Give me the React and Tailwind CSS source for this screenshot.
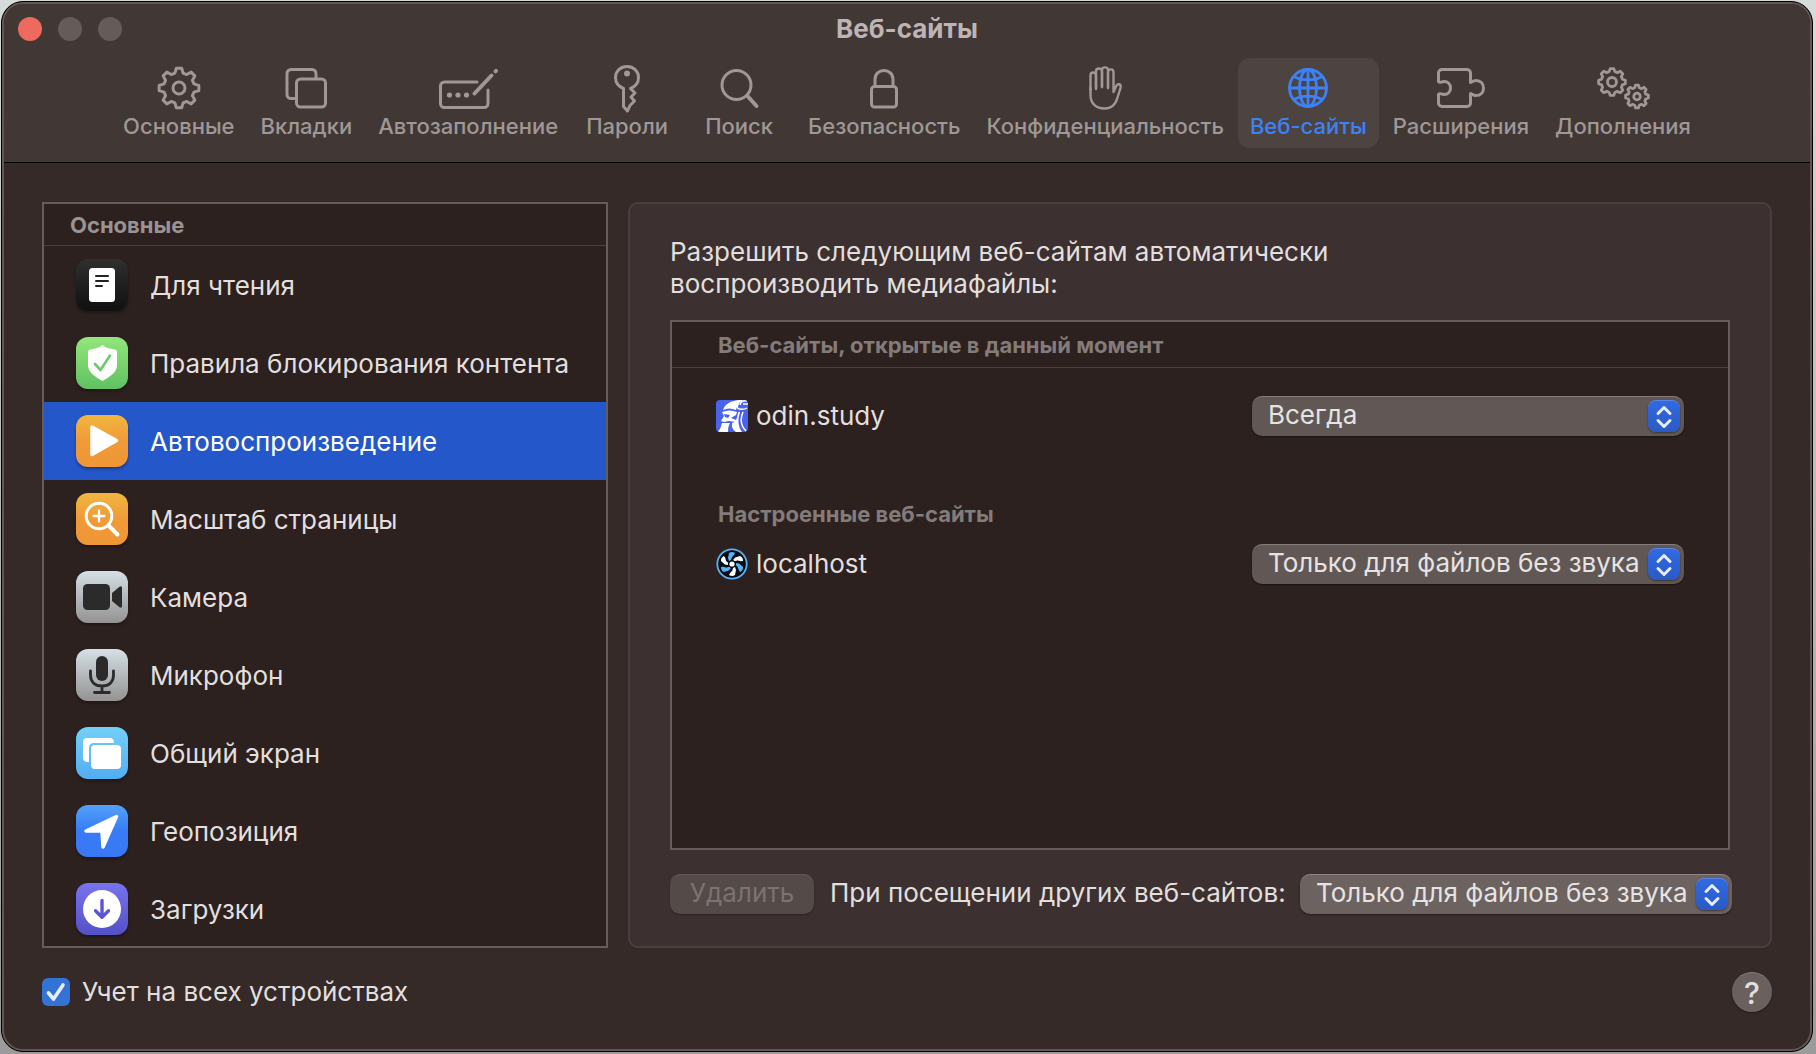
import React, { useState } from "react";

function gearPath(cx, cy, outer, inner, teeth) {
  const pts = [];
  const step = (Math.PI * 2) / teeth;
  for (let i = 0; i < teeth; i++) {
    const a = i * step - Math.PI / 2;
    [
      [inner, -0.34],
      [outer, -0.17],
      [outer, 0.17],
      [inner, 0.34],
    ].forEach(([r, t]) => {
      pts.push(`${(cx + r * Math.cos(a + t * step)).toFixed(2)} ${(cy + r * Math.sin(a + t * step)).toFixed(2)}`);
    });
  }
  return `M${pts.join("L")}Z`;
}

function ToolIcon({ w, children }) {
  return (
    <svg width={w} height="52" viewBox={`0 0 ${w} 52`} fill="none" stroke="currentColor" strokeWidth="3" strokeLinecap="round" strokeLinejoin="round" aria-hidden="true">
      {children}
    </svg>
  );
}

const toolIcons = {
  general: (
    <ToolIcon w={48}>
      <path d={gearPath(24, 26, 20, 15.5, 8)} />
      <circle cx="24" cy="26" r="6" />
    </ToolIcon>
  ),
  tabs: (
    <ToolIcon w={48}>
      <path d="M13.5 36.5H9A4 4 0 0 1 5 32.5V11.5A4 4 0 0 1 9 7.5H30A4 4 0 0 1 34 11.5V16" />
      <rect x="14.5" y="17" width="29" height="28" rx="4" />
    </ToolIcon>
  ),
  autofill: (
    <ToolIcon w={62}>
      <path d="M40 20H7.5A4 4 0 0 0 3.5 24V41.5A4 4 0 0 0 7.5 45.5H47A4 4 0 0 0 51 41.5V28" />
      <path d="M37.5 31.5L54.5 13.5" strokeWidth="4" />
      <path d="M58.5 9.3L59 8.8" strokeWidth="4" />
      <g fill="currentColor" stroke="none">
        <circle cx="12.5" cy="33" r="2.6" />
        <circle cx="21" cy="33" r="2.6" />
        <circle cx="29.5" cy="33" r="2.6" />
      </g>
    </ToolIcon>
  ),
  passwords: (
    <ToolIcon w={48}>
      <path d="M20.5 26.5C15.5 24.5 12.5 20.5 12.5 15.5C12.5 9 17.5 4.5 24 4.5S35.5 9 35.5 15.5C35.5 20.5 32.5 24.5 27.5 26.5L32 31L28 35L31.5 39L27 43.5L24.5 49L20.5 44.5Z" />
      <circle cx="24" cy="11.5" r="3" fill="currentColor" stroke="none" />
    </ToolIcon>
  ),
  search: (
    <ToolIcon w={48}>
      <circle cx="21.5" cy="23" r="14.5" />
      <path d="M32.5 34L41.5 44" strokeWidth="4" />
    </ToolIcon>
  ),
  security: (
    <ToolIcon w={48}>
      <rect x="11.5" y="24.5" width="25" height="20.5" rx="3" />
      <path d="M15 24V17.5C15 12 19 8.5 24 8.5S33 12 33 17.5V24" />
    </ToolIcon>
  ),
  privacy: (
    <ToolIcon w={48}>
      <g strokeWidth="2.4">
        <path d="M9.5 28V13.5C9.5 9.5 15 9.5 15 13.5V27" />
        <path d="M15 26V9.5C15 5.5 21 5.5 21 9.5V25" />
        <path d="M21 25V8C21 4.5 27 4.5 27 8V26" />
        <path d="M27 26V10C27 6.5 32.5 6.5 32.5 10V30L35 24.5C36.5 20.5 40.5 22 39.5 26L36.5 35.5C34.5 43 30 46.5 23.5 46.5C15 46.5 9.5 41.5 9.5 33V26" />
      </g>
    </ToolIcon>
  ),
  websites: (
    <ToolIcon w={48}>
      <g strokeWidth="2.8">
        <circle cx="24" cy="26" r="18.5" />
        <ellipse cx="24" cy="26" rx="8.5" ry="18.5" />
        <path d="M24 7.5V44.5M5.5 26H42.5M10 14.5C18 19 30 19 38 14.5M10 37.5C18 33 30 33 38 37.5" />
      </g>
    </ToolIcon>
  ),
  extensions: (
    <ToolIcon w={52}>
      <path d="M3.5 19.5V11A3.5 3.5 0 0 1 7 7.5H32A3.5 3.5 0 0 1 35.5 11V20.5C37 20.5 37.5 18.5 41 18.5C45.5 18.5 48.5 21.5 48.5 26S45.5 33.5 41 33.5C37.5 33.5 37 31.5 35.5 31.5V41A3.5 3.5 0 0 1 32 44.5H7A3.5 3.5 0 0 1 3.5 41V32.5C5 30.5 6 32.5 9 32.5C13 32.5 15.5 30 15.5 26S13 19.5 9 19.5C6 19.5 5 21.5 3.5 19.5Z" />
    </ToolIcon>
  ),
  advanced: (
    <ToolIcon w={56}>
      <g strokeWidth="2.8">
        <path d={gearPath(17, 20, 13.5, 10.8, 8)} />
        <circle cx="17" cy="20" r="4.5" />
        <path d={gearPath(42, 34.5, 11.5, 9, 8)} />
        <circle cx="42" cy="34.5" r="3.3" />
      </g>
    </ToolIcon>
  ),
};

const tools = [
  ["general", "Основные"],
  ["tabs", "Вкладки"],
  ["autofill", "Автозаполнение"],
  ["passwords", "Пароли"],
  ["search", "Поиск"],
  ["security", "Безопасность"],
  ["privacy", "Конфиденциальность"],
  ["websites", "Веб-сайты"],
  ["extensions", "Расширения"],
  ["advanced", "Дополнения"],
];

function Glyph({ children }) {
  return (
    <svg viewBox="0 0 52 52" className="size-full" fill="none" strokeLinecap="round" strokeLinejoin="round" aria-hidden="true">
      {children}
    </svg>
  );
}

const categories = [
  {
    name: "Для чтения",
    tile: "from-[#303030] to-[#101010]",
    glyph: (
      <Glyph>
        <rect x="13" y="9" width="26" height="34" rx="3.5" fill="#fff" />
        <path d="M20 17H32M20 22H32M20 27H26" stroke="#222" strokeWidth="2" />
      </Glyph>
    ),
  },
  {
    name: "Правила блокирования контента",
    tile: "from-[#92e67b] to-[#60c162]",
    glyph: (
      <Glyph>
        <path d="M26.5 8C30 11 35 12 39 12.5Q41 13 41 15V28C41 36 33 40 26.5 44C20 40 12 36 12 28V15Q12 13 14 12.5C18 12 23 11 26.5 8Z" fill="#fff" />
        <path d="M19 27L24.5 33L34 18.5" stroke="#6bcb68" strokeWidth="2.6" />
      </Glyph>
    ),
  },
  {
    name: "Автовоспроизведение",
    tile: "from-[#f0b640] via-[#f09a38] to-[#ef9635]",
    glyph: (
      <Glyph>
        <path d="M16 12L40.5 25.5L16 39.5Z" fill="#fff" stroke="#fff" strokeWidth="3.5" />
      </Glyph>
    ),
  },
  {
    name: "Масштаб страницы",
    tile: "from-[#f0b640] via-[#f09a38] to-[#ef9635]",
    glyph: (
      <Glyph>
        <g stroke="#fff">
          <circle cx="23" cy="23" r="12.8" strokeWidth="3" />
          <path d="M32.5 32.5L41.5 41.5" strokeWidth="4" />
          <path d="M23 17.5V28.5M17.5 23H28.5" strokeWidth="2.3" />
        </g>
      </Glyph>
    ),
  },
  {
    name: "Камера",
    tile: "from-[#d5e0e6] to-[#949392]",
    glyph: (
      <Glyph>
        <rect x="7" y="13" width="27" height="26" rx="4.5" fill="#2b2b2b" />
        <path d="M36 22L43.5 15.8Q46 14.5 46 17V35Q46 37.5 43.5 36.2L36 30Z" fill="#2b2b2b" />
      </Glyph>
    ),
  },
  {
    name: "Микрофон",
    tile: "from-[#d5e0e6] to-[#949392]",
    glyph: (
      <Glyph>
        <rect x="20" y="7" width="12" height="25" rx="6" fill="#2b2b2b" />
        <path d="M14.5 22V26C14.5 33 19 37 26 37S37.5 33 37.5 26V22M26 37V43.5M18.5 43.5H33.5" stroke="#2b2b2b" strokeWidth="2.8" />
      </Glyph>
    ),
  },
  {
    name: "Общий экран",
    tile: "from-[#72cff8] to-[#53adf2]",
    glyph: (
      <Glyph>
        <path d="M12 35Q7 35 7 31V15Q7 11 11 11H34Q38 11 38 16H18Q13 16 13 21V35Z" fill="#fff" />
        <rect x="15" y="18" width="30" height="24" rx="4" fill="#fff" />
      </Glyph>
    ),
  },
  {
    name: "Геопозиция",
    tile: "from-[#53a1f8] via-[#387bf7] to-[#3878f6]",
    glyph: (
      <Glyph>
        <path d="M40.5 11.5L27 42L26 26H10Z" fill="#fff" stroke="#fff" strokeWidth="3.5" />
      </Glyph>
    ),
  },
  {
    name: "Загрузки",
    tile: "from-[#7873ee] to-[#5450c6]",
    glyph: (
      <Glyph>
        <circle cx="26" cy="26" r="19" fill="#fff" />
        <path d="M26 17.5V34M19.5 27.8L26 34.2L32.5 27.8" stroke="#5b55d6" strokeWidth="3.4" />
      </Glyph>
    ),
  },
];

function OdinIcon() {
  return (
    <svg viewBox="0 0 32 32" className="size-8 shrink-0 rounded-sm" aria-hidden="true">
      <rect width="32" height="32" fill="#4a63ee" />
      <path d="M7 10C9 4 14 1 23 0H27C24 2 21 5 20 10Q13 7 7 10Z" fill="#fff" />
      <path d="M6 12Q13 9 21 12L20 15L15 18L20 20V22L13 21L8 22L5 21L8 16Z" fill="#fff" />
      <path d="M8 14L14 15L12 18L9 17Z" fill="#4a63ee" />
      <path d="M6 23L14 23Q12 26 12 32H2Q5 28 6 23Z" fill="#fff" />
      <path d="M16 23Q21 22 22 13Q23 11 24 12Q20 24 26 32H20Q15 29 16 23Z" fill="#fff" />
      <path d="M27 12C24 19 25 26 30 31M22 4Q20 9 24 9Q28 10 31 8M31 1Q25 0 24 5M32 4H27" fill="none" stroke="#fff" strokeWidth="1.5" />
    </svg>
  );
}

function LocalhostIcon() {
  return (
    <svg viewBox="0 0 32 32" className="size-8 shrink-0" aria-hidden="true">
      <circle cx="16" cy="16" r="14.7" fill="#060b14" stroke="#54b4f4" strokeWidth="1.8" />
      {[0, 60, 120, 180, 240, 300].map((a, i) => (
        <path key={a} d="M12 10L13 5Q16 3 19 5L18 7Q15 9 15 12L13 13Z" fill={i % 2 ? "#fff" : "#54b4f4"} transform={`rotate(${a} 16 16)`} />
      ))}
      <circle cx="16" cy="16" r="2.6" fill="#fff" />
    </svg>
  );
}

const policies = ["Всегда", "Только для файлов без звука", "Никогда"];

function PopUp({ id, label, initial, tone }) {
  return (
    <div className="relative w-[432px] shrink-0">
      <select
        id={id}
        aria-label={label}
        defaultValue={initial}
        className={`block h-10 w-full appearance-none rounded-[10px] border-t pr-10 pb-1 pl-4 text-[26px] leading-8 text-[#e6e3e3] shadow-[0_1px_2px_rgba(0,0,0,0.45)] outline-none ${tone}`}
      >
        {policies.map((p) => (
          <option key={p}>{p}</option>
        ))}
      </select>
      <span className="pointer-events-none absolute top-1 right-1 flex h-8 w-8 items-center justify-center rounded-lg border-t border-[#5a85e6] bg-linear-to-b from-[#3169e2] to-[#2a5ac4] shadow-[0_1px_2px_rgba(0,0,0,0.4)]">
        <svg width="18" height="24" viewBox="0 0 18 24" fill="none" stroke="#e6ecfa" strokeWidth="3" strokeLinecap="round" strokeLinejoin="round" aria-hidden="true">
          <path d="M3 8.5L9 2.5L15 8.5M3 15.5L9 21.5L15 15.5" />
        </svg>
      </span>
    </div>
  );
}

export default function App() {
  const [activeTool, setActiveTool] = useState("websites");
  const [activeCategory, setActiveCategory] = useState("Автовоспроизведение");

  return (
    <div className="flex min-h-screen flex-col bg-linear-to-b from-[#d5dcd9] to-[#9b9b9b] pt-px pr-[3px] pb-0.5 pl-px font-['Inter',sans-serif] text-[#e2dfdf]">
      <div className="flex grow flex-col overflow-hidden rounded-[22px] border border-black bg-[#352a28]">
        <div className="flex grow flex-col rounded-[21px] border-2 border-[#625755]">
          <header className="flex flex-col rounded-t-[19px] border-b border-black bg-[#413735] pb-[14px]">
            <div className="grid h-[54px] grid-cols-[1fr_auto_1fr] items-center px-3.5 pb-1">
              <div className="flex gap-4">
                <button aria-label="Закрыть" className="size-6 rounded-full bg-[#ec6a5e]" />
                <button aria-label="Свернуть" className="size-6 rounded-full bg-[#655b59]" />
                <button aria-label="Развернуть" className="size-6 rounded-full bg-[#655b59]" />
              </div>
              <h1 className="text-[26px] leading-8 font-bold text-[#beb4b3]">Веб-сайты</h1>
            </div>
            <nav className="flex justify-center gap-0.5">
              {tools.map(([id, name]) => (
                <button
                  key={id}
                  onClick={() => setActiveTool(id)}
                  className={`flex h-[90px] min-w-[110px] flex-col items-center rounded-xl px-3 pt-1 text-[22px] leading-6 font-medium ${activeTool === id ? "bg-[#4d4442] text-[#3c82f6]" : "text-[#9f9896]"}`}
                >
                  {toolIcons[id]}
                  <span>{name}</span>
                </button>
              ))}
            </nav>
          </header>

          <main className="flex grow flex-col px-[38px] pt-[39px]">
            <div className="flex gap-5">
              <section className="w-[566px] shrink-0 border-2 border-[#665c5a] bg-[#2c211f]">
                <h2 className="h-[42px] border-b border-[#4b403e] pl-[26px] text-[22px] leading-[42px] font-bold text-[#9b9391]">Основные</h2>
                <ul className="h-[700px] overflow-hidden">
                  {categories.map((c) => (
                    <li key={c.name}>
                      <button
                        onClick={() => setActiveCategory(c.name)}
                        className={`flex h-[78px] w-full items-center gap-[22px] px-8 text-left text-[26px] ${activeCategory === c.name ? "bg-[#2457c9] text-white" : ""}`}
                      >
                        <span className={`size-[52px] shrink-0 rounded-xl bg-linear-to-b shadow-[0_2px_3px_rgba(0,0,0,0.35)] ${c.tile}`}>{c.glyph}</span>
                        <span className="whitespace-nowrap">{c.name}</span>
                      </button>
                    </li>
                  ))}
                </ul>
              </section>

              <section className="flex grow flex-col rounded-[10px] border-2 border-[#4a3f3d] bg-[#3c3130] pt-8 pr-[38px] pb-8 pl-10">
                <p className="max-w-[700px] text-[26px] leading-8">Разрешить следующим веб-сайтам автоматически воспроизводить медиафайлы:</p>
                <div className="mt-5 mr-0.5 grow border-2 border-[#665c5a] bg-[#2c211f]">
                  <h3 className="h-[46px] border-b border-[#4b403e] pl-[46px] text-[22px] leading-[46px] font-bold text-[#837c7a]">Веб-сайты, открытые в данный момент</h3>
                  <div className="mt-7 flex items-center justify-between px-11">
                    <div className="flex items-center gap-2">
                      <OdinIcon />
                      <span className="text-[26px] leading-8">odin.study</span>
                    </div>
                    <PopUp id="odin" label="odin.study" initial="Всегда" tone="border-[#857d7b] bg-[#615856]" />
                  </div>
                  <h3 className="mt-16 pl-[46px] text-[22px] leading-7 font-bold text-[#837c7a]">Настроенные веб-сайты</h3>
                  <div className="mt-4 flex items-center justify-between px-11">
                    <div className="flex items-center gap-2">
                      <LocalhostIcon />
                      <span className="text-[26px] leading-8">localhost</span>
                    </div>
                    <PopUp id="localhost" label="localhost" initial="Только для файлов без звука" tone="border-[#857d7b] bg-[#615856]" />
                  </div>
                </div>
                <div className="mt-6 flex items-center">
                  <button disabled className="h-10 w-36 rounded-[10px] border-t border-[#625856] bg-[#544a48] pb-1 text-[26px] leading-8 text-[#7c7371] shadow-[0_1px_2px_rgba(0,0,0,0.3)]">Удалить</button>
                  <label htmlFor="others" className="ml-4 grow pb-0.5 text-[26px] leading-8 whitespace-nowrap">При посещении других веб-сайтов:</label>
                  <PopUp id="others" initial="Только для файлов без звука" tone="border-[#8f8785] bg-[#6c6260]" />
                </div>
              </section>
            </div>

            <footer className="mt-6 flex items-center justify-between">
              <label className="flex items-center gap-3 text-[26px] leading-8">
                <span className="relative flex size-7">
                  <input type="checkbox" defaultChecked className="peer size-7 appearance-none rounded-md bg-[#4a403e] checked:bg-[#3473d6]" />
                  <svg viewBox="0 0 28 28" className="pointer-events-none absolute inset-0 hidden peer-checked:block" fill="none" stroke="#e8effb" strokeWidth="3.6" strokeLinecap="round" strokeLinejoin="round" aria-hidden="true">
                    <path d="M6.5 15L11.5 21L21 7" />
                  </svg>
                </span>
                Учет на всех устройствах
              </label>
              <button aria-label="Справка" className="size-10 rounded-full border-t border-[#857d7b] bg-[#6a605e] text-[30px] leading-9 font-medium shadow-[0_1px_2px_rgba(0,0,0,0.4)]">?</button>
            </footer>
          </main>
        </div>
      </div>
    </div>
  );
}
